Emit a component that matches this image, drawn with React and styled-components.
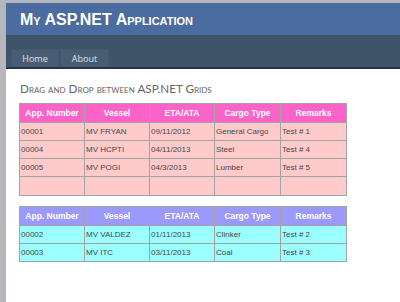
import React from "react";
import styled, { createGlobalStyle } from "styled-components";

const GlobalStyle = createGlobalStyle`
  html, body {
    margin: 0;
    padding: 0;
    background: #b6b7bc;
    overflow: hidden;
  }
`;

const Page = styled.div`
  margin: 3px 0 0 6px;
  min-height: 299px;
  background: #ffffff;
  font-family: "Liberation Sans", Arial, sans-serif;
`;

const TitleBar = styled.header`
  height: 32px;
  background: #4b6c9e;
  display: flex;
  align-items: center;
  padding-left: 14px;
`;

const AppTitle = styled.h1`
  margin: 1px 0 0 0;
  color: #ffffff;
  font-family: "Liberation Sans", Arial, sans-serif;
  font-weight: bold;
  font-size: 16px;
  font-variant: small-caps;
  letter-spacing: 0;
`;

const NavBar = styled.nav`
  height: 32px;
  background: #3f5469;
  border-bottom: 2px solid #1f3656;
  display: flex;
  align-items: flex-end;
  padding-left: 5px;
`;

const MenuItem = styled.div`
  width: ${(p) => p.$w}px;
  height: 18px;
  margin-right: 1px;
  background: #485d73;
  border: 1px solid #44596f;
  box-sizing: border-box;
  display: flex;
  align-items: center;
  justify-content: center;
  color: #dde4ec;
  font-family: "Open Sans", "Liberation Sans", sans-serif;
  font-size: 9px;
`;

const Main = styled.main`
  padding: 12px 0 0 13px;
  display: flex;
  flex-direction: column;
  align-items: flex-start;
`;

const SectionTitle = styled.h2`
  margin: 0 0 8px 1px;
  color: #666666;
  font-family: "Lato", "Liberation Sans", sans-serif;
  font-weight: normal;
  font-size: 11.7px;
  font-variant: small-caps;
  line-height: 14px;
`;

const Grid = styled.table`
  border-collapse: collapse;
  border: 1px solid #a3a3a3;
  margin-bottom: ${(p) => p.$mb || 0}px;
  font-family: "Liberation Sans", Arial, sans-serif;
  table-layout: fixed;
  width: 327px;
`;

const HeadCell = styled.th`
  background: ${(p) => p.$bg};
  color: #ffffff;
  font-weight: bold;
  font-size: 8.5px;
  height: 18px;
  padding: 0;
  border: 1px solid #a3a3a3;
  text-align: center;
`;

const Cell = styled.td`
  background: ${(p) => p.$bg};
  color: #474747;
  font-size: 8px;
  height: ${(p) => p.$h || 17}px;
  padding: 0 0 0 1px;
  border: 1px solid #a3a3a3;
  text-align: left;
  white-space: nowrap;
  overflow: hidden;
`;

const headers = ["App. Number", "Vessel", "ETA/ATA", "Cargo Type", "Remarks"];
const widths = [65, 65, 65, 66, 66];

const grid1 = [
  ["00001", "MV FRYAN", "09/11/2012", "General Cargo", "Test # 1"],
  ["00004", "MV HCPTI", "04/11/2013", "Steel", "Test # 4"],
  ["00005", "MV POGI", "04/3/2013", "Lumber", "Test # 5"],
  ["", "", "", "", ""],
];

const grid2 = [
  ["00002", "MV VALDEZ", "01/11/2013", "Clinker", "Test # 2"],
  ["00003", "MV ITC", "03/11/2013", "Coal", "Test # 3"],
];

function DataGrid({ rows, headBg, bodyBg, mb, lastTall }) {
  return (
    <Grid $mb={mb}>
      <colgroup>
        {widths.map((w, i) => (
          <col key={i} style={{ width: w }} />
        ))}
      </colgroup>
      <thead>
        <tr>
          {headers.map((h) => (
            <HeadCell key={h} $bg={headBg}>
              {h}
            </HeadCell>
          ))}
        </tr>
      </thead>
      <tbody>
        {rows.map((r, i) => (
          <tr key={i}>
            {r.map((c, j) => (
              <Cell
                key={j}
                $bg={bodyBg}
                $h={lastTall && i === rows.length - 1 ? 18 : 17}
              >
                {c}
              </Cell>
            ))}
          </tr>
        ))}
      </tbody>
    </Grid>
  );
}

export default function App() {
  return (
    <>
      <GlobalStyle />
      <Page>
        <TitleBar>
          <AppTitle>My ASP.NET Application</AppTitle>
        </TitleBar>
        <NavBar>
          <MenuItem $w={48}>Home</MenuItem>
          <MenuItem $w={49}>About</MenuItem>
        </NavBar>
        <Main>
          <SectionTitle>Drag and Drop between ASP.NET Grids</SectionTitle>
          <DataGrid
            rows={grid1}
            headBg="#fd62c9"
            bodyBg="#ffcaca"
            mb={10}
            lastTall
          />
          <DataGrid rows={grid2} headBg="#9b99fb" bodyBg="#9bffff" />
        </Main>
      </Page>
    </>
  );
}
